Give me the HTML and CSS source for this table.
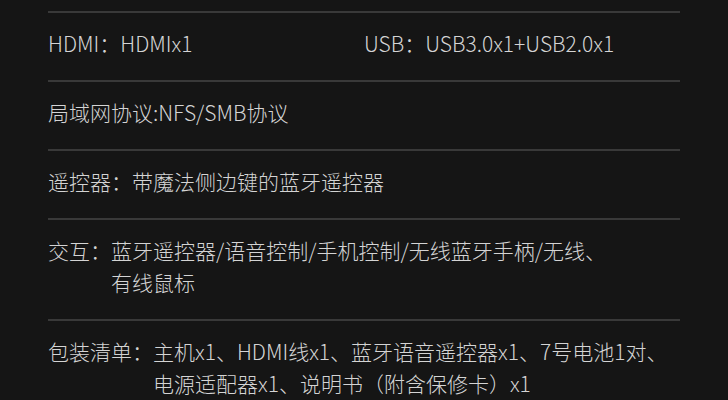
FILE: index.html
```html
<!DOCTYPE html>
<html lang="zh-CN">
<head>
  <meta charset="UTF-8" />
  <meta name="viewport" content="width=device-width, initial-scale=1.0" />
  <title>产品参数</title>
  <link rel="stylesheet" href="styles.css">
</head>
<body>
  <div id="specs">
    <div class="row two-col">
      <div class="cell"><span class="label">HDMI：</span><span class="value">HDMIx1</span></div>
      <div class="cell"><span class="label">USB：</span><span class="value">USB3.0x1+USB2.0x1</span></div>
    </div>
    <div class="row">
      <div class="cell"><span class="value">局域网协议:NFS/SMB协议</span></div>
    </div>
    <div class="row">
      <div class="cell"><span class="label">遥控器：</span><span class="value">带魔法侧边键的蓝牙遥控器</span></div>
    </div>
    <div class="row">
      <div class="cell"><span class="label">交互：</span><span class="value">蓝牙遥控器/语音控制/手机控制/无线蓝牙手柄/无线、<br>有线鼠标</span></div>
    </div>
    <div class="row">
      <div class="cell"><span class="label">包装清单：</span><span class="value">主机x1、HDMI线x1、蓝牙语音遥控器x1、7号电池1对、<br>电源适配器x1、说明书（附含保修卡）x1</span></div>
    </div>
  </div>
</body>
</html>
```

FILE: styles.css
```css
* { box-sizing: border-box; }
html, body {
  margin: 0;
  background: #151515;
}
body {
  font-family: "Noto Sans CJK SC", "Noto Sans", sans-serif;
  font-size: 21px;
  font-weight: 300;
  line-height: 32px;
  color: #d4d4d4;
  overflow: hidden;
}
#specs {
  width: 632px;
  margin: 11px 0 0 48px;
}
.row {
  border-top: 2px solid #393939;
  padding: 14px 0 21px;
}
.two-col {
  display: grid;
  grid-template-columns: 1fr 1fr;
}
.cell { display: flex; }
.label { flex: none; white-space: nowrap; }
.value { flex: 1; }
```
